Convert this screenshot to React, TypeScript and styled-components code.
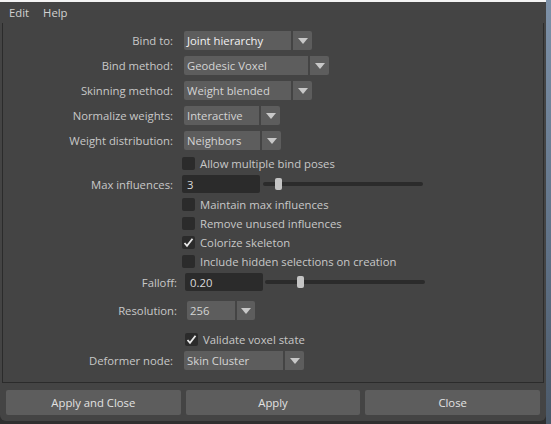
import styled, { createGlobalStyle } from "styled-components"

const GlobalStyle = createGlobalStyle`
  html, body {
    margin: 0;
    padding: 0;
    overflow: hidden;
    background: #2f2f2f;
  }
`

const FONT = `"Open Sans", "Noto Sans", sans-serif`

const ArrowDown = () => (
  <svg width="10" height="6" viewBox="0 0 10 6">
    <path d="M0 0 H10 L5 6 Z" fill="#c8c8c8" />
  </svg>
)

const Check = () => (
  <svg width="11" height="11" viewBox="0 0 11 11">
    <path d="M1.5 6 L4 8.8 L9.5 1.8" fill="none" stroke="#e8e8e8" strokeWidth="1.8" />
  </svg>
)

interface DropdownProps {
  value: string;
  width: number;
  arrow?: number;
  bright?: boolean;
}

const Dropdown = ({ value, width, arrow = 19, bright }: DropdownProps) => (
  <Select>
    <SelectValue $w={width} $bright={bright}>{value}</SelectValue>
    <SelectArrow $w={arrow}><ArrowDown /></SelectArrow>
  </Select>
)

const CheckItem = ({ label, checked }: { label: string; checked?: boolean }) => (
  <CheckWrap>
    <Box>{checked && <Check />}</Box>
    <CheckText>{label}</CheckText>
  </CheckWrap>
)

const Slider = ({ pos }: { pos: number }) => (
  <Track>
    <Thumb style={{ left: pos }} />
  </Track>
)

const App = () => {
  return (
    <>
      <GlobalStyle />
      <Screen>
        <Window>
          <TopStrip />
          <MenuBar>
            <MenuItem>Edit</MenuItem>
            <MenuItem>Help</MenuItem>
          </MenuBar>
          <Panel>
            <Row $h={25}>
              <Label>Bind to:</Label>
              <Dropdown value="Joint hierarchy" width={107} bright />
            </Row>
            <Row $h={25}>
              <Label>Bind method:</Label>
              <Dropdown value="Geodesic Voxel" width={124} />
            </Row>
            <Row $h={25}>
              <Label>Skinning method:</Label>
              <Dropdown value="Weight blended" width={107} />
            </Row>
            <Row $h={25}>
              <Label>Normalize weights:</Label>
              <Dropdown value="Interactive" width={75} />
            </Row>
            <Row $h={25}>
              <Label>Weight distribution:</Label>
              <Dropdown value="Neighbors" width={76} />
            </Row>
            <Row $h={21} $gap={9}>
              <Label />
              <CheckItem label="Allow multiple bind poses" />
            </Row>
            <Row $h={20} $gap={9}>
              <Label>Max influences:</Label>
              <Field>3</Field>
              <Slider pos={12} />
            </Row>
            <Row $h={20} $gap={9}>
              <Label />
              <CheckItem label="Maintain max influences" />
            </Row>
            <Row $h={19} $gap={9}>
              <Label />
              <CheckItem label="Remove unused influences" />
            </Row>
            <Row $h={19} $gap={9}>
              <Label />
              <CheckItem label="Colorize skeleton" checked />
            </Row>
            <Row $h={19} $gap={9}>
              <Label />
              <CheckItem label="Include hidden selections on creation" />
            </Row>
            <Row $h={22} $lw={174} $gap={8}>
              <Label>Falloff:</Label>
              <Field>0.20</Field>
              <Slider pos={32} />
            </Row>
            <Row $h={35} $lw={174} $gap={10}>
              <Label>Resolution:</Label>
              <Dropdown value="256" width={48} arrow={18} />
            </Row>
            <Row $h={23} $lw={174} $gap={8}>
              <Label />
              <CheckItem label="Validate voxel state" checked />
            </Row>
            <Row $h={19}>
              <Label>Deformer node:</Label>
              <Dropdown value="Skin Cluster" width={99} />
            </Row>
          </Panel>
          <ButtonBar>
            <Button>Apply and Close</Button>
            <Button>Apply</Button>
            <Button>Close</Button>
          </ButtonBar>
        </Window>
        <FrameEdge />
      </Screen>
    </>
  )
}

export default App

const Screen = styled.div`
  display: flex;
  width: 551px;
  height: 424px;
  background: #2f2f2f;
  font-family: ${FONT};
  font-size: 11.3px;
`

const Window = styled.div`
  width: 546px;
  height: 421px;
  display: flex;
  flex-direction: column;
  background: #444444;
  border-bottom-left-radius: 6px;
  border-bottom-right-radius: 6px;
`

const TopStrip = styled.div`
  height: 2px;
  background: #f4f4f4;
`

const MenuBar = styled.div`
  height: 20px;
  padding-bottom: 1px;
  display: flex;
  align-items: center;
  gap: 14px;
  padding-left: 9px;
  color: #d2d2d2;
`

const MenuItem = styled.span`
  user-select: none;
`

const Panel = styled.div`
  margin: 0 2px;
  height: 360px;
  border: 1px solid #2b2b2b;
  border-top: none;
  padding-top: 5px;
  box-sizing: border-box;
  color: #c8c8c8;
`

const Row = styled.div<{ $h: number; $lw?: number; $gap?: number }>`
  height: ${p => p.$h}px;
  display: grid;
  grid-template-columns: ${p => p.$lw ?? 170}px auto auto 1fr;
  column-gap: ${p => p.$gap ?? 11}px;
  align-items: center;
`

const Label = styled.div`
  text-align: right;
  white-space: nowrap;
`

const Select = styled.div`
  display: flex;
  gap: 2px;
  height: 19px;
`

const SelectValue = styled.div<{ $w: number; $bright?: boolean }>`
  width: ${p => p.$w}px;
  box-sizing: border-box;
  padding-left: 3px;
  display: flex;
  align-items: center;
  background: #5d5d5d;
  border-radius: 2px 0 0 2px;
  color: ${p => (p.$bright ? "#f2f2f2" : "#d4d4d4")};
  white-space: nowrap;
`

const SelectArrow = styled.div<{ $w: number }>`
  width: ${p => p.$w}px;
  display: flex;
  align-items: center;
  justify-content: center;
  background: #5d5d5d;
  border-radius: 0 2px 2px 0;
`

const CheckWrap = styled.div`
  display: flex;
  align-items: center;
  gap: 5px;
  white-space: nowrap;
`

const Box = styled.div`
  width: 13px;
  height: 13px;
  border-radius: 2px;
  background: #2b2b2b;
  display: flex;
  align-items: center;
  justify-content: center;
`

const CheckText = styled.span`
  color: #c8c8c8;
`

const Field = styled.div`
  width: 78px;
  height: 18px;
  box-sizing: border-box;
  padding-left: 5px;
  display: flex;
  align-items: center;
  background: #2b2b2b;
  border-radius: 2px;
  color: #dadada;
`

const Track = styled.div`
  position: relative;
  width: 160px;
  height: 4px;
  margin-left: -6px;
  border-radius: 2px;
  background: #2b2b2b;
`

const Thumb = styled.div`
  position: absolute;
  top: -4px;
  width: 7px;
  height: 12px;
  border-radius: 2px;
  background: #c4c4c4;
`

const ButtonBar = styled.div`
  display: grid;
  grid-template-columns: 1fr 1fr 1fr;
  gap: 5px;
  padding: 7px 6px 5px;
`

const Button = styled.button`
  height: 25px;
  border: none;
  border-radius: 2px;
  background: #5d5d5d;
  color: #e2e2e2;
  font-family: ${FONT};
  font-size: 11.3px;
  padding: 0;
`

const FrameEdge = styled.div`
  width: 5px;
  height: 424px;
  background: linear-gradient(#7d91a8, #5f7186 60%, #4b5969);
`
